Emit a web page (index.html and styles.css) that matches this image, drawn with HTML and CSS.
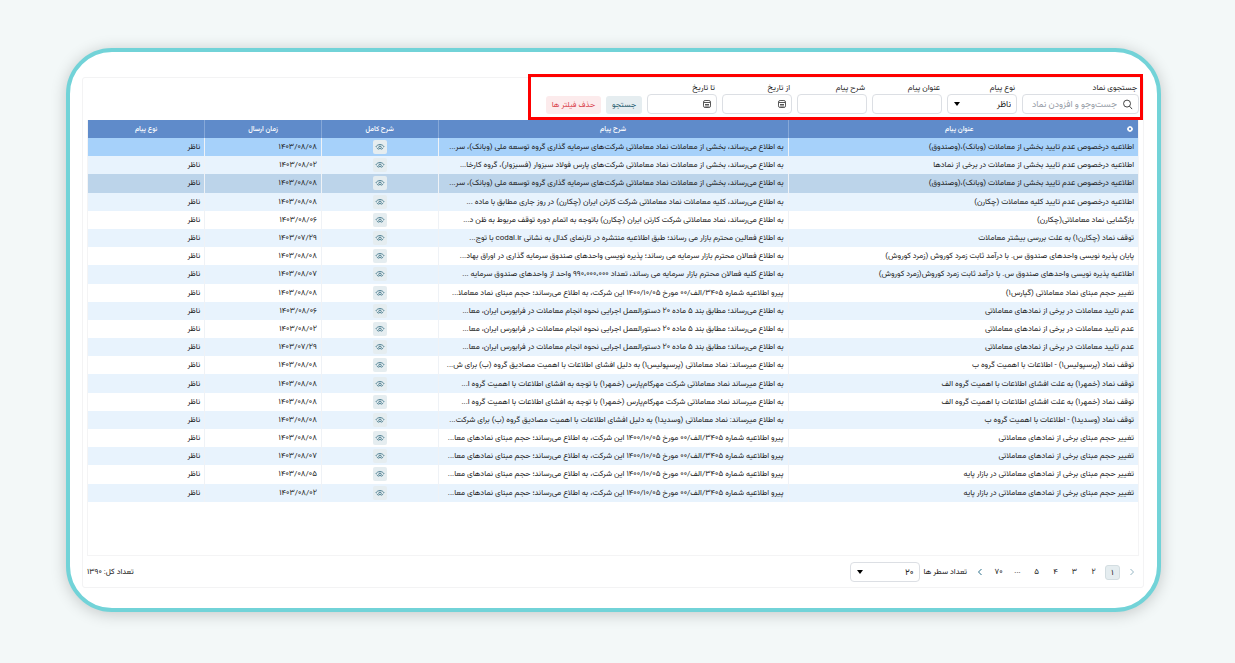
FILE: index.html
```html
<!DOCTYPE html>
<html lang="fa" dir="rtl">
<head>
<meta charset="utf-8">
<meta name="viewport" content="width=device-width, initial-scale=1">
<title>پیام‌های ناظر</title>
<link rel="stylesheet" href="styles.css">
</head>
<body>
<svg class="sprite" aria-hidden="true">
  <symbol id="eye" viewBox="0 0 10 8"><path d="M1 3.600C2.600.8 7.400.8 9 3.600M2 5c.4.700.8 1 1.300 1.200M8 5c-.4.700-.8 1-1.300 1.200" fill="none" stroke="currentColor" stroke-linecap="round"/><circle cx="5" cy="4.500" r="1.300" fill="none" stroke="currentColor"/></symbol>
  <symbol id="calendar" viewBox="0 0 10 10"><rect x="1.500" y="1.500" width="7" height="7" rx="1.600" fill="none" stroke="currentColor"/><path d="M1.500 3.500h7M3 5.500h4M3 7h4" fill="none" stroke="currentColor"/></symbol>
  <symbol id="caret" viewBox="0 0 8 6"><path d="M1 1h6L4 5z" fill="currentColor"/></symbol>
</svg>
<main class="card">
  <section class="panel">
    <form class="filters">
      <div class="field field-search">
        <label for="symbol">جستجوی نماد</label>
        <div class="control">
          <svg class="lens" viewBox="0 0 12 12" aria-hidden="true"><circle cx="5.500" cy="5" r="3.800"/><path d="M8.200 7.800 11 11"/></svg>
          <input id="symbol" type="text" placeholder="جست‌وجو و افزودن نماد">
        </div>
      </div>
      <div class="field">
        <label for="kind">نوع پیام</label>
        <div class="control"><select id="kind"><option>ناظر</option></select><svg class="caret" aria-hidden="true"><use href="#caret"/></svg></div>
      </div>
      <div class="field">
        <label for="title">عنوان پیام</label>
        <div class="control"><input id="title" type="text"></div>
      </div>
      <div class="field">
        <label for="text">شرح پیام</label>
        <div class="control"><input id="text" type="text"></div>
      </div>
      <div class="field">
        <label for="from">از تاریخ</label>
        <div class="control"><svg class="calendar" aria-hidden="true"><use href="#calendar"/></svg><input id="from" type="text"></div>
      </div>
      <div class="field">
        <label for="to">تا تاریخ</label>
        <div class="control"><svg class="calendar" aria-hidden="true"><use href="#calendar"/></svg><input id="to" type="text"></div>
      </div>
      <button class="btn btn-search" type="button">جستجو</button>
      <button class="btn btn-clear" type="button">حذف فیلتر ها</button>
    </form>

    <div class="table-box">
      <table class="messages">
        <thead>
          <tr>
            <th class="wide"><svg class="gear" viewBox="0 0 8 8" aria-hidden="true"><circle cx="4" cy="4" r="1.800"/><path d="M4 1v1M4 6v1M1 4h1M6 4h1M1.900 1.900l.6.6M5.500 5.500l.6.6M6.100 1.900l-.6.6M2.500 5.500l-.6.6"/></svg>عنوان پیام</th>
            <th class="wide">شرح پیام</th>
            <th>شرح کامل</th>
            <th>زمان ارسال</th>
            <th>نوع پیام</th>
          </tr>
        </thead>
        <tbody id="rows"></tbody>
      </table>
    </div>

    <footer class="footer">
      <nav class="pages" aria-label="صفحه‌ها">
        <button class="page arrow" type="button" disabled aria-label="قبلی"><svg viewBox="0 0 6 8"><path d="M1.500 1 4.500 4l-3 3"/></svg></button>
        <button class="page current" type="button">۱</button>
        <button class="page" type="button">۲</button>
        <button class="page" type="button">۳</button>
        <button class="page" type="button">۴</button>
        <button class="page" type="button">۵</button>
        <span class="page">...</span>
        <button class="page" type="button">۷۰</button>
        <button class="page arrow" type="button" aria-label="بعدی"><svg viewBox="0 0 6 8"><path d="M4.500 1l-3 3 3 3"/></svg></button>
      </nav>
      <label for="size">تعداد سطر ها</label>
      <div class="control size"><select id="size"><option>۲۰</option></select><svg class="caret" aria-hidden="true"><use href="#caret"/></svg></div>
      <span class="total">تعداد کل: ۱۳۹۰</span>
    </footer>
  </section>
</main>
<script src="rows.js"></script>
</body>
</html>
```
FILE: rows.js
```js
const partial = 'به اطلاع می‌رساند، بخشی از معاملات نماد معاملاتی شرکت‌های سرمایه گذاری گروه توسعه ملی (وبانک)، سر...';
const clause = 'به اطلاع می‌رساند؛ مطابق بند ۵ ماده ۲۰ دستورالعمل اجرایی نحوه انجام معاملات در فرابورس ایران، معا...';
const mehrkam = 'به اطلاع میرساند نماد معاملاتی شرکت مهرکام‌پارس (خمهر۱) با توجه به افشای اطلاعات با اهمیت گروه ا...';
const volume = 'پیرو اطلاعیه شماره ۳۴۰۵/الف/۰۰ مورخ ۱۴۰۰/۱۰/۰۵ این شرکت، به اطلاع می‌رساند؛ حجم مبنای نمادهای معا...';
const data = [
  ['اطلاعیه درخصوص عدم تایید بخشی از معاملات (وبانک)،(وصندوق)', partial, '۰۸/۰۸', 'selected'],
  ['اطلاعیه درخصوص عدم تایید بخشی از معاملات در برخی از نمادها', 'به اطلاع می‌رساند، بخشی از معاملات نماد معاملاتی شرکت‌های پارس فولاد سبزوار (فسبزوار)، گروه کارخا...', '۰۸/۰۲'],
  ['اطلاعیه درخصوص عدم تایید بخشی از معاملات (وبانک)،(وصندوق)', partial, '۰۸/۰۸', 'hovered'],
  ['اطلاعیه درخصوص عدم تایید کلیه معاملات (چکارن)', 'به اطلاع می‌رساند، کلیه معاملات نماد معاملاتی شرکت کارتن ایران (چکارن) در روز جاری مطابق با ماده ...', '۰۸/۰۸'],
  ['بازگشایی نماد معاملاتی(چکارن)', 'به اطلاع می‌رساند، نماد معاملاتی شرکت کارتن ایران (چکارن) باتوجه به اتمام دوره توقف مربوط به ظن د...', '۰۸/۰۶'],
  ['توقف نماد (چکارن۱) به علت بررسی بیشتر معاملات', 'به اطلاع فعالین محترم بازار می رساند؛ طبق اطلاعیه منتشره در تارنمای کدال به نشانی codal.ir با توج...', '۰۷/۲۹'],
  ['پایان پذیره نویسی واحدهای صندوق س. با درآمد ثابت زمرد کوروش (زمرد کوروش)', 'به اطلاع فعالان محترم بازار سرمایه می رساند؛ پذیره نویسی واحدهای صندوق سرمایه گذاری در اوراق بهاد...', '۰۸/۰۸'],
  ['اطلاعیه پذیره نویسی واحدهای صندوق س. با درآمد ثابت زمرد کوروش(زمرد کوروش)', 'به اطلاع کلیه فعالان محترم بازار سرمایه می رساند، تعداد ۹۹۰،۰۰۰،۰۰۰ واحد از واحدهای صندوق سرمایه ...', '۰۸/۰۷'],
  ['تغییر حجم مبنای نماد معاملاتی (گپارس۱)', 'پیرو اطلاعیه شماره ۳۴۰۵/الف/۰۰ مورخ ۱۴۰۰/۱۰/۰۵ این شرکت، به اطلاع می‌رساند؛ حجم مبنای نماد معاملا...', '۰۸/۰۸'],
  ['عدم تایید معاملات در برخی از نمادهای معاملاتی', clause, '۰۸/۰۶'],
  ['عدم تایید معاملات در برخی از نمادهای معاملاتی', clause, '۰۸/۰۲'],
  ['عدم تایید معاملات در برخی از نمادهای معاملاتی', clause, '۰۷/۲۹'],
  ['توقف نماد (پرسپولیس۱) - اطلاعات با اهمیت گروه ب', 'به اطلاع میرساند: نماد معاملاتی (پرسپولیس۱) به دلیل افشای اطلاعات با اهمیت مصادیق گروه (ب) برای ش...', '۰۸/۰۸'],
  ['توقف نماد (خمهر۱) به علت افشای اطلاعات با اهمیت گروه الف', mehrkam, '۰۸/۰۸'],
  ['توقف نماد (خمهر۱) به علت افشای اطلاعات با اهمیت گروه الف', mehrkam, '۰۸/۰۸'],
  ['توقف نماد (وسدید۱) - اطلاعات با اهمیت گروه ب', 'به اطلاع میرساند: نماد معاملاتی (وسدید۱) به دلیل افشای اطلاعات با اهمیت مصادیق گروه (ب) برای شرکت...', '۰۸/۰۸'],
  ['تغییر حجم مبنای برخی از نمادهای معاملاتی', volume, '۰۸/۰۸'],
  ['تغییر حجم مبنای برخی از نمادهای معاملاتی', volume, '۰۸/۰۷'],
  ['تغییر حجم مبنای برخی از نمادهای معاملاتی در بازار پایه', volume, '۰۸/۰۵'],
  ['تغییر حجم مبنای برخی از نمادهای معاملاتی در بازار پایه', volume, '۰۸/۰۲'],
];
document.getElementById('rows').innerHTML = data.map(([title, text, day, state = '']) => `
  <tr class="${state}">
    <td>${title}</td>
    <td>${text}</td>
    <td class="view"><button class="eye" type="button" aria-label="نمایش شرح کامل"><svg><use href="#eye"/></svg></button></td>
    <td>۱۴۰۳/${day}</td>
    <td>ناظر</td>
  </tr>`).join('');
```
FILE: styles.css
```css
* { box-sizing: border-box; }

body {
  margin: 0;
  min-height: 100vh;
  padding: 48px 74px 51px 66px;
  display: flex;
  background: #f3f8f8;
  color: #1c1c1c;
  font-family: Roboto, Vazirmatn, sans-serif;
  font-size: 8px;
  line-height: 12px;
}

input, select, button { font: inherit; color: inherit; }
.sprite { display: none; }

.card {
  flex: 1;
  min-width: 0;
  display: flex;
  padding: 25px 13px 20px 12px;
  background: #fff;
  border: 4px solid #72d3d8;
  border-radius: 46px;
  box-shadow: 0 2px 16px rgba(0, 0, 0, .2);
}

.panel {
  flex: 1;
  min-width: 0;
  display: flex;
  flex-direction: column;
  padding: 4px 4px 5px 4px;
  border: 1px solid #f3f3f4;
  border-radius: 3px;
}

.filters {
  position: relative;
  align-self: flex-start;
  display: flex;
  align-items: flex-end;
  gap: 5px;
  margin-bottom: 6px;
}

.filters::after {
  content: "";
  position: absolute;
  inset: -8px -4px -6px -18px;
  border: 3px solid #fe0000;
  pointer-events: none;
}

.field { width: 70px; }
.field-search { width: 117px; }
.field label { display: block; padding: 0 2px; }

.control {
  position: relative;
  display: flex;
  align-items: center;
  height: 20px;
  border: 1px solid #dcdfe4;
  border-radius: 4px;
  background: #fff;
}

.control input, .control select {
  flex: 1;
  min-width: 0;
  width: 100%;
  height: 100%;
  padding: 0 5px;
  border: 0;
  outline: 0;
  background: none;
  appearance: none;
  font-size: 9px;
}
.control input::placeholder { color: #979da7; }

.lens {
  flex: none;
  width: 11px;
  height: 11px;
  margin-right: 5px;
  fill: none;
  stroke: #333;
  stroke-width: 1;
}
.calendar { flex: none; width: 10px; height: 10px; margin-right: 4px; color: #555; }
.caret { position: absolute; left: 5px; width: 8px; height: 6px; color: #000; pointer-events: none; }

.btn {
  height: 18px;
  padding: 0 6px;
  border: 0;
  border-radius: 3px;
}
.btn-search { background: #e5edf0; color: #1c5a6c; }
.btn-clear { background: #fcebec; color: #d9434c; }

.table-box {
  flex: 1;
  border: 1px solid #f4f4f5;
  border-top: 0;
}

.messages {
  width: 100%;
  height: 382px;
  table-layout: fixed;
  border-collapse: collapse;
}
.messages th, .messages td {
  padding: 0 4px;
  text-align: right;
  white-space: nowrap;
  overflow: hidden;
  border-left: 1px solid rgba(228, 234, 240, .6);
}
.messages th:last-child, .messages td:last-child { border-left: 0; }
.messages th {
  height: 18px;
  background: #5f8bca;
  color: #fff;
  font-size: 7px;
  font-weight: 500;
  text-align: center;
}
.messages th { border-left-color: #86a8d8; }
.wide { width: 33.33%; }
.gear { float: right; width: 8px; height: 8px; margin-top: 2px; fill: none; stroke: #fff; stroke-width: 1.3; }
.messages tbody tr:nth-child(even) { background: #e8f3fd; }
.messages tbody .selected { background: #a6d1fa; }
.messages tbody .hovered { background: #bcd4ea; }
.messages .view { text-align: center; }

.eye {
  display: inline-grid;
  place-items: center;
  width: 14px;
  height: 14px;
  padding: 0;
  border: 0;
  border-radius: 2px;
  background: #e5edf0;
  color: #4f8092;
  vertical-align: middle;
}
.eye svg { width: 10px; height: 8px; }

.footer {
  display: flex;
  align-items: center;
  padding-top: 6px;
}
.pages { display: flex; gap: 4px; margin-left: 5px; }
.page {
  width: 15px;
  height: 15px;
  padding: 0;
  border: 0;
  border-radius: 3px;
  background: none;
  text-align: center;
  white-space: nowrap;
}
.page.current { background: #e5edf0; border: 1px solid #d3dde1; line-height: 13px; }
.arrow { color: #2c6f8a; }
.arrow:disabled { opacity: .5; }
.arrow svg { display: block; width: 6px; height: 8px; margin: 0 auto; fill: none; stroke: currentColor; stroke-width: 1; }
.size { width: 70px; margin-right: 4px; }
.total { margin-right: auto; }
```
